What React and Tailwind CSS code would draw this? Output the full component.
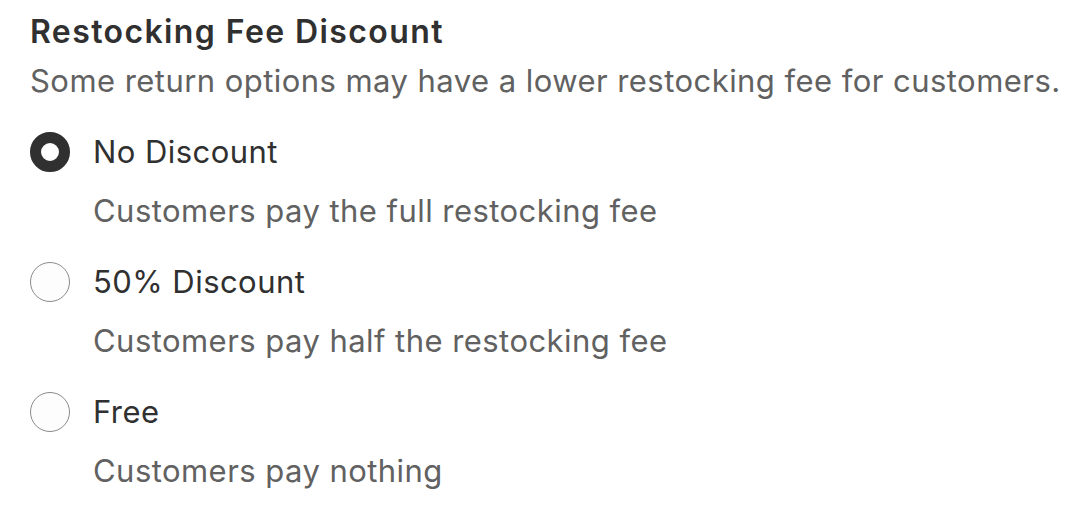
import React from "react";

const options = [
  { label: "No Discount", desc: "Customers pay the full restocking fee", checked: true },
  { label: "50% Discount", desc: "Customers pay half the restocking fee", checked: false },
  { label: "Free", desc: "Customers pay nothing", checked: false },
];

export default function App() {
  return (
    <div
      className="w-[1090px] h-[526px] bg-white pl-[30px] pt-[12px] text-[31px] leading-[40px] tracking-[0.45px]"
      style={{ fontFamily: "Inter, 'Noto Sans', sans-serif" }}
    >
      <h2 className="font-semibold text-[32px] text-[#303030] tracking-[1.4px]">Restocking Fee Discount</h2>
      <p className="mt-[9px] text-[#616161]">
        Some return options may have a lower restocking fee for customers.
      </p>
      <div className="mt-[31px] flex flex-col gap-[31px]">
        {options.map((o) => (
          <div key={o.label} className="flex flex-col gap-[19px]">
            <div className="flex items-center gap-[23px]">
              {o.checked ? (
                <span className="w-[40px] h-[40px] rounded-full border-[11px] border-[#303030] bg-white shrink-0" />
              ) : (
                <span className="w-[40px] h-[40px] rounded-full border border-[#8a8a8a] bg-[#fdfdfd] shrink-0" />
              )}
              <span className="text-[#303030]">{o.label}</span>
            </div>
            <p className="pl-[63px] text-[#616161]">{o.desc}</p>
          </div>
        ))}
      </div>
    </div>
  );
}
